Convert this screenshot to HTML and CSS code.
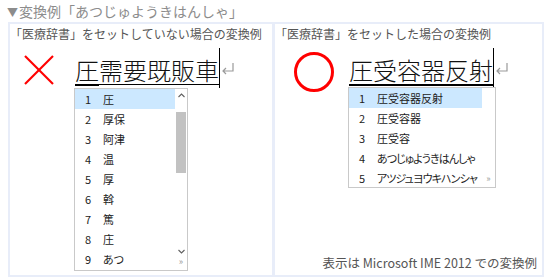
FILE: index.html
```html
<!DOCTYPE html>
<html lang="ja">
<head>
    <meta charset="UTF-8">
    <title>変換例</title>
    <link rel="stylesheet" href="styles.css">
</head>
<body>
    <div class="title"><span class="tri">▼</span>変換例「あつじゅようきはんしゃ」</div>

    <div class="compare">
        <div class="cell cell-ng">
            <div class="caption">「医療辞書」をセットしていない場合の変換例</div>
            <div class="compose">
                <svg class="mark" width="32" height="32" viewBox="0 0 32 32">
                    <line x1="2" y1="2" x2="30" y2="30" stroke="#ff0000" stroke-width="2.2"/>
                    <line x1="30" y1="2" x2="2" y2="30" stroke="#ff0000" stroke-width="2.2"/>
                </svg>
                <div class="word">
                    <span class="seg focus">圧</span><span class="seg">需要既販車</span>
                </div>
                <svg class="ret" width="14" height="14" viewBox="0 0 14 14">
                    <path d="M12 1 V9 H2 M5 6 L2 9 L5 12" fill="none" stroke="#9a9a9a" stroke-width="1.2"/>
                </svg>
            </div>
            <div class="cands cands-long">
                <ul class="rows">
                    <li class="on"><b>1</b>圧</li>
                    <li><b>2</b>厚保</li>
                    <li><b>3</b>阿津</li>
                    <li><b>4</b>温</li>
                    <li><b>5</b>厚</li>
                    <li><b>6</b>斡</li>
                    <li><b>7</b>篤</li>
                    <li><b>8</b>庄</li>
                    <li><b>9</b>あつ</li>
                </ul>
                <div class="scroll">
                    <svg class="chev" width="7" height="5" viewBox="0 0 7 5">
                        <path d="M0.5 4 L3.5 1 L6.5 4" fill="none" stroke="#606060" stroke-width="1.1"/>
                    </svg>
                    <span class="thumb"></span>
                    <svg class="chev down" width="7" height="5" viewBox="0 0 7 5">
                        <path d="M0.5 1 L3.5 4 L6.5 1" fill="none" stroke="#606060" stroke-width="1.1"/>
                    </svg>
                    <span class="more">»</span>
                </div>
            </div>
        </div>

        <div class="cell cell-ok">
            <div class="caption">「医療辞書」をセットした場合の変換例</div>
            <div class="compose">
                <svg class="mark" width="44" height="44" viewBox="0 0 44 44">
                    <circle cx="22" cy="22" r="18.5" fill="none" stroke="#ff0000" stroke-width="3"/>
                </svg>
                <div class="word">
                    <span class="seg focus">圧受容器反射</span>
                </div>
                <svg class="ret" width="14" height="14" viewBox="0 0 14 14">
                    <path d="M12 1 V9 H2 M5 6 L2 9 L5 12" fill="none" stroke="#9a9a9a" stroke-width="1.2"/>
                </svg>
            </div>
            <div class="cands cands-short">
                <ul class="rows">
                    <li class="on"><b>1</b>圧受容器反射</li>
                    <li><b>2</b>圧受容器</li>
                    <li><b>3</b>圧受容</li>
                    <li class="kana"><b>4</b>あつじゅようきはんしゃ</li>
                    <li class="kana"><b>5</b>アツジュヨウキハンシャ</li>
                </ul>
                <div class="scroll">
                    <span class="more">»</span>
                </div>
            </div>
            <div class="note">表示は Microsoft IME 2012 での変換例</div>
        </div>
    </div>
</body>
</html>
```

FILE: styles.css
```css
body {
    margin: 0;
    font-family: "Noto Sans CJK JP", "Noto Sans", sans-serif;
    background: #ffffff;
    color: #555555;
}
.title {
    height: 22px;
    line-height: 22px;
    padding-left: 7px;
    font-size: 14px;
    color: #8c8c8c;
}
.tri {
    font-size: 11px;
    margin-right: 1px;
}
.compare {
    margin-left: 8px;
    width: 532px;
    height: 251px;
    padding: 2px;
    background: #e8edf9;
    display: grid;
    grid-template-columns: 262px 267px;
    gap: 3px;
}
.cell {
    background: #ffffff;
    display: flex;
    flex-direction: column;
    min-width: 0;
}
.caption {
    height: 20px;
    line-height: 20px;
    font-size: 12px;
    color: #555555;
    white-space: nowrap;
}
.compose {
    margin-top: 4px;
    height: 40px;
    display: flex;
    align-items: flex-start;
}
.cell-ng .compose {
    padding-left: 13px;
}
.cell-ng .mark {
    margin-top: 6px;
    margin-right: 20px;
}
.cell-ok .compose {
    padding-left: 17px;
}
.cell-ok .mark {
    margin-top: 2px;
    margin-right: 13px;
}
.word {
    height: 40px;
    box-sizing: border-box;
    padding-top: 7px;
    border-right: 1px solid #000000;
    display: flex;
    align-items: flex-start;
    font-size: 24px;
    font-weight: 300;
    color: #111111;
    white-space: nowrap;
}
.seg {
    line-height: 29px;
    border-bottom: 1px solid #000000;
}
.seg.focus {
    border-bottom-width: 2px;
}
.ret {
    margin-top: 14px;
    margin-left: 1px;
}
.cands {
    align-self: flex-start;
    display: flex;
    border: 1px solid #c9c9c9;
    background: #ffffff;
    font-size: 11px;
    color: #222222;
}
.cands-long {
    margin-left: 64px;
    width: 112px;
    height: 181px;
}
.cands-short {
    margin-left: 73px;
    width: 146px;
    height: 99px;
    margin-top: -1px;
}
.rows {
    list-style: none;
    margin: 0;
    padding: 0;
    flex: 1;
}
.rows li {
    height: 20px;
    line-height: 20px;
    padding-left: 10px;
    white-space: nowrap;
    font-feature-settings: "palt";
}
.rows li.kana {
    letter-spacing: -0.9px;
}
.rows li.on {
    background: #cce8ff;
}
.rows b {
    display: inline-block;
    width: 18px;
    font-weight: normal;
    letter-spacing: 0;
}
.scroll {
    width: 12px;
    display: flex;
    flex-direction: column;
    align-items: center;
    color: #777777;
    font-size: 9px;
}
.cands-short .scroll {
    width: 13px;
    justify-content: flex-end;
}
.chev {
    margin-top: 4px;
    flex: none;
}
.chev.down {
    margin-top: auto;
    margin-bottom: 2px;
}
.thumb {
    width: 10px;
    height: 61px;
    margin-top: 14px;
    background: #c2c2c2;
    flex: none;
}
.more {
    height: 14px;
    line-height: 12px;
    color: #9a9a9a;
}
.note {
    margin-top: auto;
    margin-bottom: 3px;
    padding-right: 5px;
    text-align: right;
    font-size: 12.5px;
    line-height: 18px;
    color: #555555;
}
```
